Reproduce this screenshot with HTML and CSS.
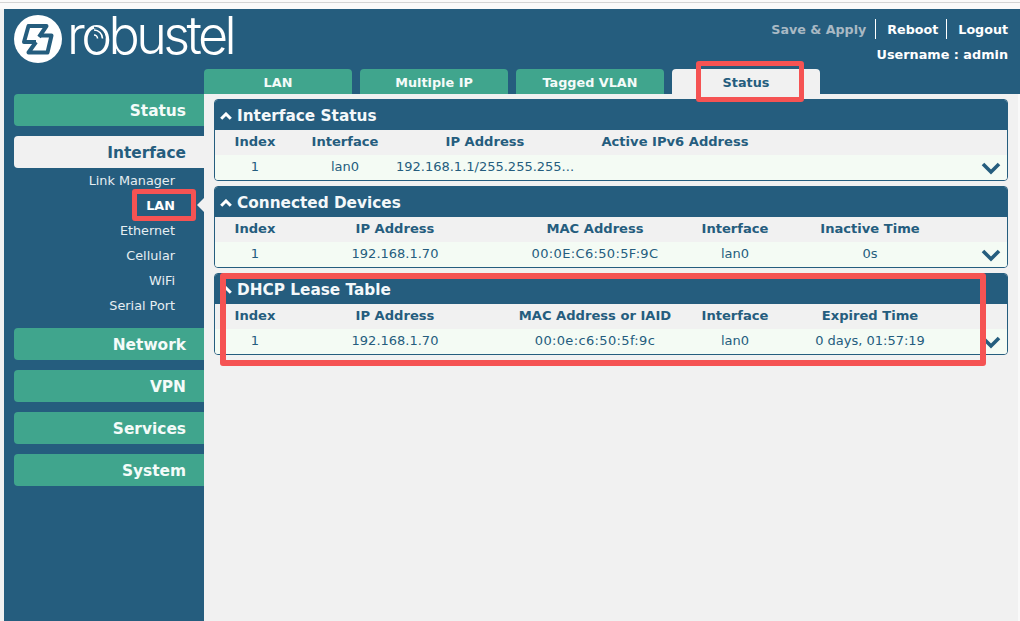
FILE: index.html
```html
<!DOCTYPE html>
<html lang="en">
<head>
<meta charset="utf-8">
<title>Robustel</title>
<link rel="stylesheet" href="styles.css">
</head>
<body>
<div class="browser-strip"></div>
<div class="app">
  <header class="header">
    <div class="logo">
      <svg class="logo-mark" viewBox="0 0 48 48" aria-hidden="true">
        <circle cx="24" cy="24" r="24" fill="#fff"/>
        <path class="mark-stroke" d="M22 27H10L14.5 11H32.5L25 22"/>
        <path class="mark-stroke" d="M26 20.5H37.5L33.5 37.5H14.5L22 27"/>
      </svg>
      <span class="logo-text">robustel</span>
      <svg class="logo-waves" viewBox="0 0 20 20" aria-hidden="true">
        <path class="wave-gap" d="M4 2.5A11 11 0 0 1 15 13.5"/>
        <path class="wave-gap" d="M4 7.5A6 6 0 0 1 10 13.5"/>
        <path class="wave-line" d="M4 5A8.5 8.5 0 0 1 12.5 13.5"/>
        <path class="wave-line" d="M4 10A3.5 3.5 0 0 1 7.5 13.5"/>
      </svg>
    </div>
    <div class="header-right">
      <div class="actions">
        <a class="action action-muted">Save &amp; Apply</a>
        <a class="action">Reboot</a>
        <a class="action">Logout</a>
      </div>
      <div class="username">Username : admin</div>
    </div>
  </header>
  <div class="body">
    <nav class="sidebar">
      <div class="nav-main">Status</div>
      <div class="nav-main nav-open">Interface</div>
      <ul class="subnav">
        <li>Link Manager</li>
        <li class="sub-active">LAN</li>
        <li>Ethernet</li>
        <li>Cellular</li>
        <li>WiFi</li>
        <li>Serial Port</li>
      </ul>
      <div class="nav-main">Network</div>
      <div class="nav-main">VPN</div>
      <div class="nav-main">Services</div>
      <div class="nav-main">System</div>
    </nav>
    <main class="main">
      <div class="tabs">
        <div class="tab">LAN</div>
        <div class="tab">Multiple IP</div>
        <div class="tab">Tagged VLAN</div>
        <div class="tab tab-active">Status</div>
      </div>
      <div class="content">
        <section class="panel">
          <h2 class="panel-title"><svg class="chev-up" viewBox="0 0 12 8"><path d="M1.2 6.8L6 2L10.8 6.8"/></svg>Interface Status</h2>
          <div class="row head cols-a"><span>Index</span><span>Interface</span><span>IP Address</span><span>Active IPv6 Address</span></div>
          <div class="row data cols-a"><span>1</span><span>lan0</span><span>192.168.1.1/255.255.255...</span><span></span>
            <svg class="chev-down" viewBox="0 0 20 14"><path d="M2 3L10 11L18 3"/></svg></div>
        </section>
        <section class="panel">
          <h2 class="panel-title"><svg class="chev-up" viewBox="0 0 12 8"><path d="M1.2 6.8L6 2L10.8 6.8"/></svg>Connected Devices</h2>
          <div class="row head cols-b"><span>Index</span><span>IP Address</span><span>MAC Address</span><span>Interface</span><span>Inactive Time</span></div>
          <div class="row data cols-b"><span>1</span><span>192.168.1.70</span><span class="mac">00:0E:C6:50:5F:9C</span><span>lan0</span><span>0s</span>
            <svg class="chev-down" viewBox="0 0 20 14"><path d="M2 3L10 11L18 3"/></svg></div>
        </section>
        <section class="panel">
          <h2 class="panel-title"><svg class="chev-up" viewBox="0 0 12 8"><path d="M1.2 6.8L6 2L10.8 6.8"/></svg>DHCP Lease Table</h2>
          <div class="row head cols-b"><span>Index</span><span>IP Address</span><span>MAC Address or IAID</span><span>Interface</span><span>Expired Time</span></div>
          <div class="row data cols-b"><span>1</span><span>192.168.1.70</span><span class="mac">00:0e:c6:50:5f:9c</span><span>lan0</span><span>0 days, 01:57:19</span>
            <svg class="chev-down" viewBox="0 0 20 14"><path d="M2 3L10 11L18 3"/></svg></div>
        </section>
      </div>
    </main>
  </div>
</div>
<div class="mark mark-tab"></div>
<div class="mark mark-lan"></div>
<div class="mark mark-table"></div>
</body>
</html>
```
FILE: styles.css
```css
* { box-sizing: border-box; }
html, body { margin: 0; height: 100%; }
body {
  position: relative;
  height: 621px;
  overflow: hidden;
  background: #f1f1f1;
  color: #255d7e;
  font-family: "DejaVu Sans", Verdana, sans-serif;
  display: flex;
  flex-direction: column;
}
.browser-strip {
  height: 9px;
  background: #fafafa;
  flex: none;
  padding-top: 2px;
}
.browser-strip::before {
  content: "";
  display: block;
  height: 1px;
  background: #d4d4d4;
}
.app {
  flex: 1;
  margin-left: 4px;
  display: flex;
  flex-direction: column;
  min-height: 0;
}
.header {
  height: 60px;
  flex: none;
  background: #255d7e;
  display: flex;
  justify-content: space-between;
  padding: 6px 12px 0 10px;
}
.logo { position: relative; display: flex; align-items: flex-start; }
.logo-mark { width: 48px; height: 48px; display: block; flex: none; }
.mark-stroke { fill: none; stroke: #255d7e; stroke-width: 4; stroke-linejoin: round; }
.logo-text {
  margin-left: 5px;
  margin-top: -11px;
  color: #fff;
  font-family: Inter, "Open Sans", sans-serif;
  font-weight: 300;
  font-size: 52px;
  line-height: 64px;
  letter-spacing: -3.6px;
}
.logo-waves { position: absolute; left: 76px; top: 10px; width: 20px; height: 20px; }
.wave-gap, .wave-line { fill: none; }
.wave-gap { stroke: #255d7e; stroke-width: 1.4; }
.wave-line { stroke: #fff; stroke-width: 1.6; }
.header-right { display: flex; flex-direction: column; align-items: flex-end; color: #fff; font-weight: 700; font-size: 12.8px; }
.actions { display: flex; margin-top: 4px; font-size: 12.7px; }
.action { height: 20px; line-height: 21px; padding: 0 8px 0 11px; border-left: 1px solid #fff; }
.action:first-child { border-left: 0; padding-right: 9px; }
.action:last-child { padding-right: 0; }
.action-muted { color: #a9b9c4; }
.username { margin-top: 6px; line-height: 20px; }
.body { flex: 1; display: flex; min-height: 0; }
.sidebar {
  width: 200px;
  flex: none;
  background: #255d7e;
  padding: 25px 0 0 10px;
}
.nav-main {
  height: 32px;
  margin-bottom: 10px;
  padding-right: 18px;
  background: #40a58d;
  color: #f4fbf9;
  border-radius: 4px 0 0 4px;
  text-align: right;
  font-weight: 700;
  font-size: 15.4px;
  line-height: 34px;
}
.nav-open { background: #f1f1f1; color: #255d7e; margin-bottom: 0; }
.subnav { list-style: none; margin: 0 0 10px; padding: 0 29px 0 0; color: #e6eef2; font-size: 12.8px; text-align: right; }
.subnav li { height: 25px; line-height: 25px; }
.sub-active { color: #fff; font-weight: 700; position: relative; }
.sub-active::after {
  content: "";
  position: absolute;
  right: -29px;
  top: 5px;
  border: 7px solid transparent;
  border-left: 0;
  border-right-color: #f1f1f1;
}
.main { flex: 1; min-width: 0; display: flex; flex-direction: column; }
.tabs { height: 25px; flex: none; background: #255d7e; display: flex; gap: 8px; }
.tab {
  width: 148px;
  background: #40a58d;
  color: #f4fbf9;
  border-radius: 4px 4px 0 0;
  text-align: center;
  font-weight: 700;
  font-size: 12.8px;
  line-height: 27px;
}
.tab-active { background: #f1f1f1; color: #255d7e; }
.content {
  flex: 1;
  padding: 5px 10px 0 10px;
  border-right: 2px solid #f9f9f9;
  display: flex;
  flex-direction: column;
  gap: 5px;
}
.panel {
  height: 82px;
  border: 1px solid #255d7e;
  border-radius: 4px;
  overflow: hidden;
  flex: none;
}
.panel-title {
  margin: 0;
  height: 30px;
  background: #255d7e;
  color: #f4f8fa;
  font-size: 15.3px;
  font-weight: 700;
  display: flex;
  align-items: center;
  padding: 2px 0 0 5px;
}
.chev-up { width: 12px; height: 8px; margin-right: 5px; }
.chev-up path { fill: none; stroke: #fff; stroke-width: 3; }
.row { display: grid; height: 25px; align-items: center; text-align: center; position: relative; padding-bottom: 2px; }
.cols-a { grid-template-columns: 80px 100px 180px 200px; }
.cols-b { grid-template-columns: 80px 200px 200px 80px 190px; }
.head { background: #f1f1f1; font-weight: 700; font-size: 13.1px; }
.data { background: #f4fbf4; font-size: 13px; }
.mac { letter-spacing: 0.35px; }
.chev-down { position: absolute; right: 6px; top: 6px; width: 20px; height: 14px; }
.chev-down path { fill: none; stroke: #255d7e; stroke-width: 3.6; }
.mark {
  position: absolute;
  border: 5px solid #f55353;
  border-radius: 3px;
}
.mark-tab { left: 696px; top: 61px; width: 108px; height: 41px; }
.mark-lan { left: 132px; top: 189px; width: 64px; height: 32px; }
.mark-table { left: 220px; top: 273px; width: 766px; height: 93px; border-width: 6px; }
```
